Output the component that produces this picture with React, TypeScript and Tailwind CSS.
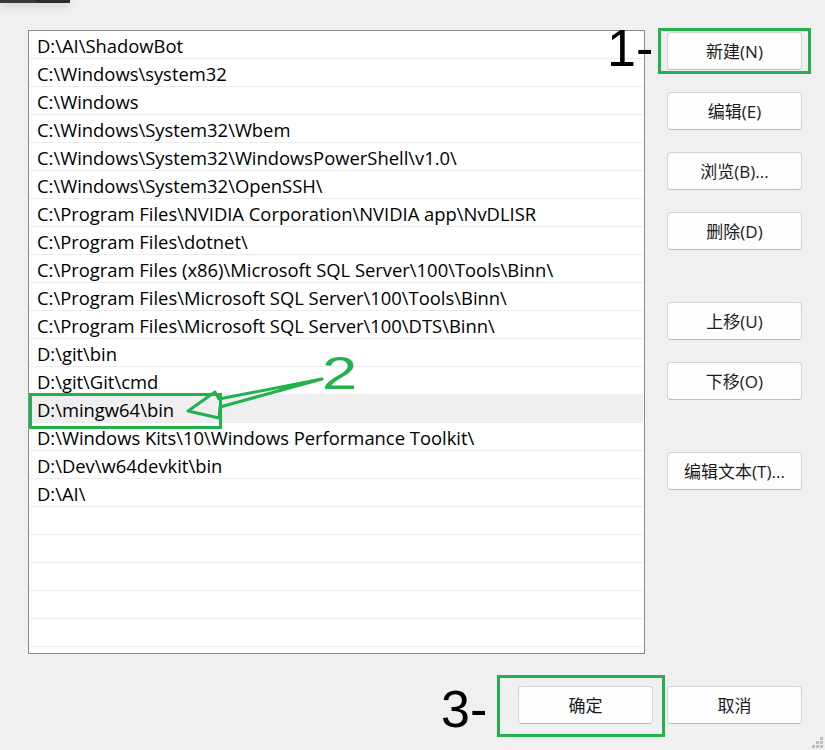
import React from 'react';

const paths = [
  'D:\\AI\\ShadowBot',
  'C:\\Windows\\system32',
  'C:\\Windows',
  'C:\\Windows\\System32\\Wbem',
  'C:\\Windows\\System32\\WindowsPowerShell\\v1.0\\',
  'C:\\Windows\\System32\\OpenSSH\\',
  'C:\\Program Files\\NVIDIA Corporation\\NVIDIA app\\NvDLISR',
  'C:\\Program Files\\dotnet\\',
  'C:\\Program Files (x86)\\Microsoft SQL Server\\100\\Tools\\Binn\\',
  'C:\\Program Files\\Microsoft SQL Server\\100\\Tools\\Binn\\',
  'C:\\Program Files\\Microsoft SQL Server\\100\\DTS\\Binn\\',
  'D:\\git\\bin',
  'D:\\git\\Git\\cmd',
  'D:\\mingw64\\bin',
  'D:\\Windows Kits\\10\\Windows Performance Toolkit\\',
  'D:\\Dev\\w64devkit\\bin',
  'D:\\AI\\',
];

const TOTAL_ROWS = 22;
const SELECTED = 13;

function Button({ label, className = '' }: { label: string; className?: string }) {
  return (
    <div
      className={`flex h-[38px] w-[135px] items-center justify-center rounded-[4px] border border-[#d3d3d3] border-b-[#bdbdbd] bg-[#fdfdfd] pt-px text-[17px] text-[#1b1b1b] ${className}`}
    >
      {label}
    </div>
  );
}

function PathList() {
  const rows = Array.from({ length: TOTAL_ROWS }, (_, i) => paths[i] ?? '');
  return (
    <div className="h-[624px] w-[617px] border border-[#868a91] bg-white px-px">
      {rows.map((p, i) => (
        <div
          key={i}
          className={`flex h-[28px] items-center border-b border-[#ececec] pl-[7px] pt-[2px] text-[18.4px] text-black ${
            i === SELECTED ? 'bg-[#efefef]' : ''
          }`}
        >
          {p}
        </div>
      ))}
    </div>
  );
}

export default function App() {
  return (
    <div
      className="relative h-[750px] w-[825px] overflow-hidden bg-[#f0f0f0]"
      style={{ fontFamily: '"Open Sans", "Noto Sans CJK SC", sans-serif' }}
    >
      {/* sliver of a window behind */}
      <div className="absolute left-0 top-0 flex h-[3px] w-[70px] shadow-[0_2px_8px_rgba(0,0,0,0.25)]">
        <div className="w-[36px] bg-[#3a3a3a]" />
        <div className="w-[34px] bg-[#2c2c2c]" />
      </div>

      <div className="pl-[28px] pt-[30px]">
        <div className="flex">
          <PathList />
          <div className="ml-[22px] mt-[2px] flex flex-col">
            <div className="flex flex-col gap-[22px]">
              <Button label="新建(N)" />
              <Button label="编辑(E)" />
              <Button label="浏览(B)..." />
              <Button label="删除(D)" />
            </div>
            <div className="mt-[52px] flex flex-col gap-[22px]">
              <Button label="上移(U)" />
              <Button label="下移(O)" />
            </div>
            <div className="mt-[52px]">
              <Button label="编辑文本(T)..." />
            </div>
          </div>
        </div>
        <div className="mt-[32px] flex justify-end gap-[14px] pr-[23px]">
          <Button label="确定" />
          <Button label="取消" />
        </div>
      </div>

      {/* annotations */}
      <div
        className="absolute left-[607px] top-[22px] text-[52px] leading-none text-black"
        style={{ fontFamily: '"Liberation Sans", Arial, sans-serif' }}
      >
        1-
      </div>
      <div className="absolute left-[658px] top-[28px] h-[46px] w-[153px] border-[3px] border-[#22b14c]" />

      <div
        className="absolute left-[441px] top-[683px] text-[52px] leading-none text-black"
        style={{ fontFamily: '"Liberation Sans", Arial, sans-serif' }}
      >
        3-
      </div>
      <div className="absolute left-[497px] top-[675px] h-[62px] w-[168px] border-[3px] border-[#22b14c]" />

      <div className="absolute left-[29px] top-[393px] h-[36px] w-[193px] border-[3px] border-[#22b14c]" />
      <div
        className="absolute left-[322px] top-[349px] origin-left scale-x-[1.35] text-[47px] leading-none text-[#22b14c]"
        style={{ fontFamily: '"Liberation Sans", Arial, sans-serif' }}
      >
        2
      </div>
      <svg className="absolute left-0 top-0" width="825" height="750" viewBox="0 0 825 750" fill="none">
        <polyline
          points="188,411 215,392 219,399 322,379 220,407 219,418 188,411"
          stroke="#22b14c"
          strokeWidth="3"
          strokeLinejoin="round"
          strokeLinecap="round"
        />
      </svg>

      {/* resize grip */}
      <svg className="absolute bottom-[1px] right-[1px]" width="12" height="12" viewBox="0 0 12 12">
        {[
          [8, 0],
          [4, 4],
          [8, 4],
          [0, 8],
          [4, 8],
          [8, 8],
        ].map(([x, y], i) => (
          <rect key={i} x={x} y={y} width="3" height="3" fill="#bfbfbf" />
        ))}
      </svg>
    </div>
  );
}
